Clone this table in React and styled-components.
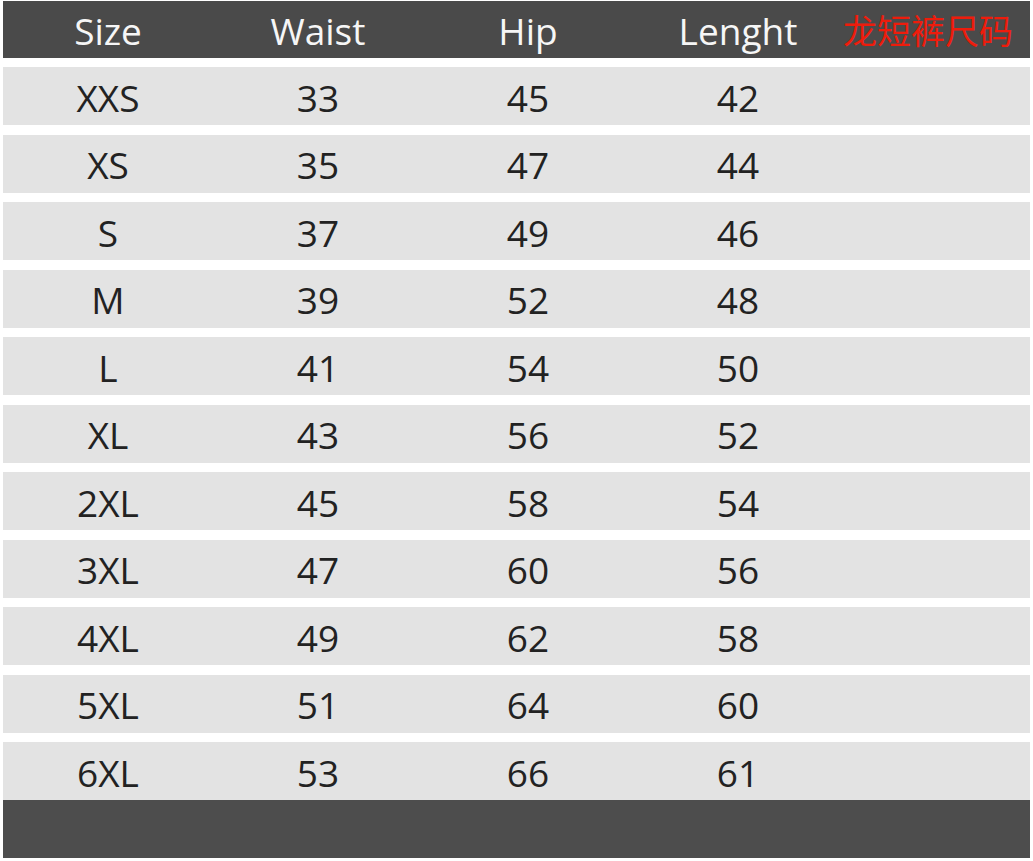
import styled, { createGlobalStyle } from 'styled-components';

const GlobalStyle = createGlobalStyle`
    html, body {
        margin: 0;
        padding: 0;
        background: #fff;
    }
    body {
        font-family: "Open Sans", "Noto Sans", sans-serif;
    }
`

const rows = [
    ['XXS', 33, 45, 42],
    ['XS', 35, 47, 44],
    ['S', 37, 49, 46],
    ['M', 39, 52, 48],
    ['L', 41, 54, 50],
    ['XL', 43, 56, 52],
    ['2XL', 45, 58, 54],
    ['3XL', 47, 60, 56],
    ['4XL', 49, 62, 58],
    ['5XL', 51, 64, 60],
    ['6XL', 53, 66, 61],
];

const App = () => {
    return (<>
        <GlobalStyle />
        <Sheet>
            <HeadRow>
                <Cell>Size</Cell>
                <Cell>Waist</Cell>
                <Cell>Hip</Cell>
                <Cell>Lenght</Cell>
                <Title>龙短裤尺码</Title>
            </HeadRow>
            <Body>
                {rows.map((r) => (
                    <Row key={r[0]}>
                        {r.map((v, i) => <Cell key={i}>{v}</Cell>)}
                        <Cell />
                    </Row>
                ))}
            </Body>
            <Footer />
        </Sheet>
    </>)
}

const Sheet = styled.div`
    width: 1027px;
    padding: 1px 3px 0 3px;
    display: flex;
    flex-direction: column;
`

const Grid = styled.div`
    display: grid;
    grid-template-columns: 210px 210px 210px 210px 1fr;
    align-items: center;
`

const HeadRow = styled(Grid)`
    height: 57px;
    background: #4a4a4a;
    color: #f6f6f6;
    margin-bottom: 9px;
`

const Body = styled.div`
    display: flex;
    flex-direction: column;
    gap: 9.5px;
`

const Row = styled(Grid)`
    height: 58px;
    background: #e3e3e3;
    color: #222;
`

const Cell = styled.div`
    text-align: center;
    font-size: 37px;
    line-height: 1;
    padding-top: 2px;
`

const Title = styled.div`
    color: #ee1c0c;
    font-family: "Noto Sans CJK SC", sans-serif;
    font-size: 34px;
    line-height: 1;
    text-align: left;
`

const Footer = styled.div`
    height: 58px;
    background: #4d4d4d;
`

export default App;
